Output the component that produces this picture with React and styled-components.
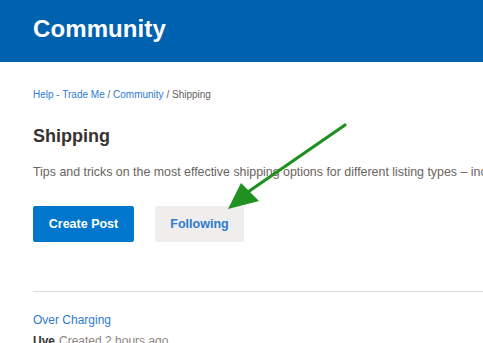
import React from "react";
import styled, { createGlobalStyle } from "styled-components";

const Global = createGlobalStyle`
  html, body { margin: 0; padding: 0; background: #fff; overflow: hidden; }
  body { font-family: "Liberation Sans", Arial, sans-serif; }
`;

const Page = styled.div`
  position: relative;
  width: 483px;
  height: 343px;
  overflow: hidden;
`;

const Header = styled.header`
  height: 62px;
  background: #0062af;
  display: flex;
  align-items: center;
  padding: 0 33px 4px;
  box-sizing: border-box;
`;

const Title = styled.h1`
  margin: 0;
  color: #fff;
  font-size: 24px;
  font-weight: 700;
  letter-spacing: 0.1px;
`;

const Main = styled.main`
  padding: 26px 0 0 33px;
  display: flex;
  flex-direction: column;
`;

const Crumbs = styled.nav`
  font-size: 10px;
  line-height: 14px;
  color: #65605c;
  white-space: nowrap;
`;

const Crumb = styled.a`
  color: #2e7bcf;
  text-decoration: none;
`;

const Heading = styled.h2`
  margin: 23px 0 0;
  font-size: 18px;
  line-height: 22px;
  font-weight: 700;
  color: #38332f;
`;

const Desc = styled.p`
  margin: 17px 0 0;
  font-size: 12.4px;
  line-height: 16px;
  color: #6a6560;
  white-space: nowrap;
`;

const Actions = styled.div`
  display: flex;
  gap: 21px;
  margin-top: 26px;
`;

const Button = styled.button`
  height: 36px;
  padding: 0;
  width: ${(p) => p.$w}px;
  border: none;
  border-radius: 2px;
  font-family: inherit;
  font-size: 12.5px;
  font-weight: 700;
  background: ${(p) => (p.$primary ? "#0077cc" : "#efeeec")};
  color: ${(p) => (p.$primary ? "#fff" : "#2e7bcf")};
`;

const Divider = styled.hr`
  margin: 49px 0 0;
  border: none;
  border-top: 1px solid #dcdbd9;
  height: 0;
`;

const PostTitle = styled.a`
  margin-top: 20px;
  font-size: 12px;
  line-height: 16px;
  color: #2e7bcf;
  text-decoration: none;
`;

const Meta = styled.div`
  margin-top: 5px;
  font-size: 12px;
  line-height: 16px;
  color: #8a8580;
  white-space: nowrap;
`;

const Author = styled.b`
  color: #38332f;
  margin-right: 4px;
`;

const Annotation = styled.svg`
  position: absolute;
  left: 0;
  top: 0;
  pointer-events: none;
`;

export default function App() {
  return (
    <Page>
      <Global />
      <Header>
        <Title>Community</Title>
      </Header>
      <Main>
        <Crumbs>
          <Crumb href="#">Help - Trade Me</Crumb> / <Crumb href="#">Community</Crumb> / Shipping
        </Crumbs>
        <Heading>Shipping</Heading>
        <Desc>
          Tips and tricks on the most effective shipping options for different listing types – including
        </Desc>
        <Actions>
          <Button $primary $w={101}>Create Post</Button>
          <Button $w={89}>Following</Button>
        </Actions>
        <Divider />
        <PostTitle href="#">Over Charging</PostTitle>
        <Meta>
          <Author>Uve</Author>Created 2 hours ago
        </Meta>
      </Main>
      <Annotation width="483" height="343" viewBox="0 0 483 343">
        <line x1="345" y1="125" x2="245" y2="194" stroke="#1e9120" strokeWidth="3.2" strokeLinecap="round" />
        <polygon points="228,209 241,183 259,201" fill="#1e9120" />
      </Annotation>
    </Page>
  );
}
